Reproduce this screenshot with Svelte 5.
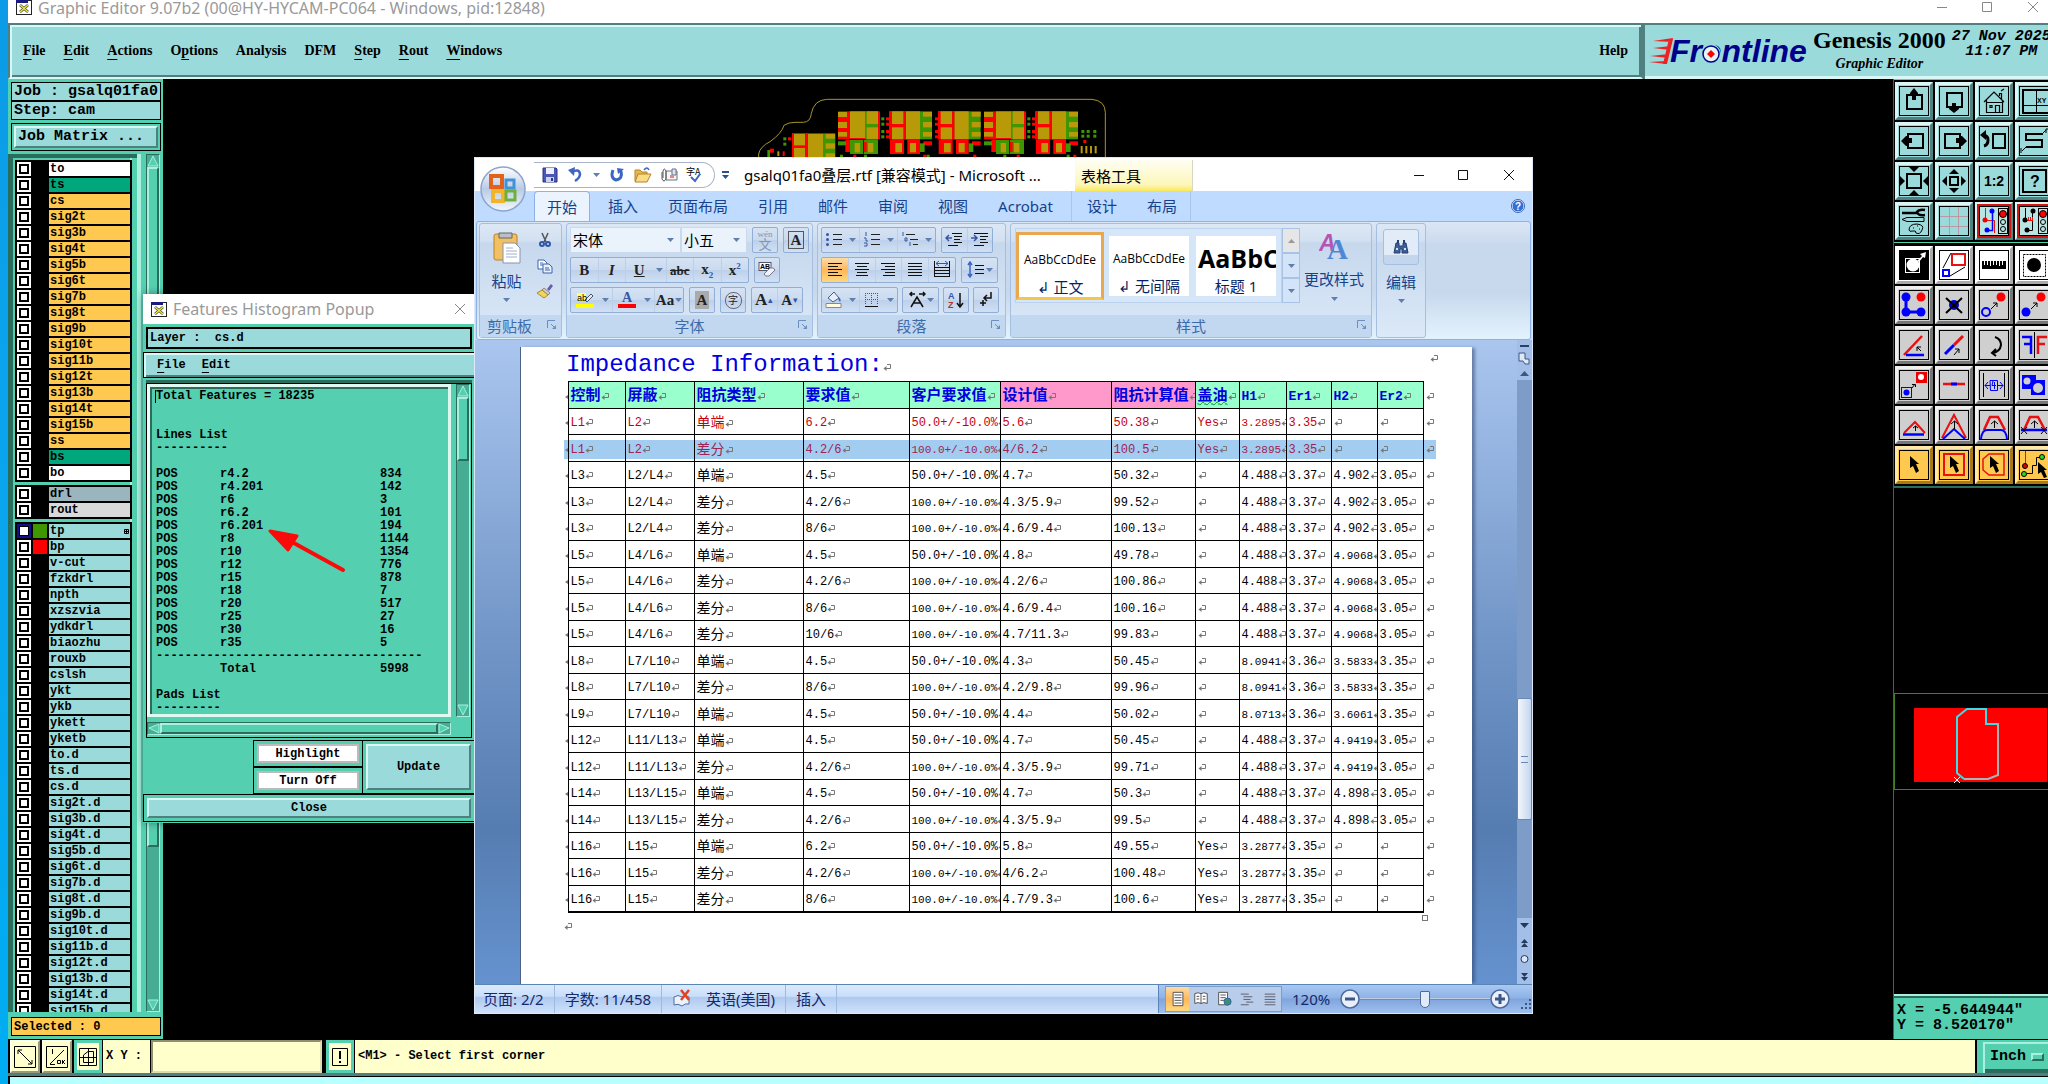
<script>
  const menus = [['F', 'ile'], ['E', 'dit'], ['A', 'ctions'], ['', 'O', 'p', 'tions'], ['', 'Analysis'], ['', 'DFM'], ['S', 'tep'], ['R', 'out'], ['W', 'indows']];

  const boardLayers = ['to', 'ts', 'cs', 'sig2t', 'sig3b', 'sig4t', 'sig5b', 'sig6t', 'sig7b', 'sig8t', 'sig9b', 'sig10t',
    'sig11b', 'sig12t', 'sig13b', 'sig14t', 'sig15b', 'ss', 'bs', 'bo'];
  const drillLayers = ['drl', 'rout'];
  const miscLayers = ['tp', 'bp', 'v-cut', 'fzkdrl', 'npth', 'xzszvia', 'ydkdrl', 'biaozhu', 'rouxb', 'cslsh', 'ykt', 'ykb',
    'ykett', 'yketb', 'to.d', 'ts.d', 'cs.d', 'sig2t.d', 'sig3b.d', 'sig4t.d', 'sig5b.d', 'sig6t.d', 'sig7b.d', 'sig8t.d',
    'sig9b.d', 'sig10t.d', 'sig11b.d', 'sig12t.d', 'sig13b.d', 'sig14t.d', 'sig15b.d'];
  const layerGroups = [boardLayers, drillLayers, miscLayers];

  function layerColor(name) {
    if (name === 'to' || name === 'bo') return 'white';
    if (name === 'ts' || name === 'bs') return 'mask';
    if (name === 'drl') return 'drill';
    if (name === 'rout') return 'route';
    if (boardLayers.includes(name)) return 'copper';
    return 'misc';
  }

  const lines = [['r4.2', 834], ['r4.201', 142], ['r6', 3], ['r6.2', 101], ['r6.201', 194], ['r8', 1144], ['r10', 1354],
    ['r12', 776], ['r15', 878], ['r18', 7], ['r20', 517], ['r25', 27], ['r30', 16], ['r35', 5]];

  const headers = ['控制', '屏蔽', '阻抗类型', '要求值', '客户要求值', '设计值', '阻抗计算值', '盖油', 'H1', 'Er1', 'H2', 'Er2'];
  const SE = '50.0+/-10.0%';
  const DF = '100.0+/-10.0%';
  const rows = [
    ['L1', 'L2', '单端', '6.2', SE, '5.6', '50.38', 'Yes', '3.2895', '3.35', '', ''],
    ['L1', 'L2', '差分', '4.2/6', DF, '4/6.2', '100.5', 'Yes', '3.2895', '3.35', '', ''],
    ['L3', 'L2/L4', '单端', '4.5', SE, '4.7', '50.32', '', '4.488', '3.37', '4.902', '3.05'],
    ['L3', 'L2/L4', '差分', '4.2/6', DF, '4.3/5.9', '99.52', '', '4.488', '3.37', '4.902', '3.05'],
    ['L3', 'L2/L4', '差分', '8/6', DF, '4.6/9.4', '100.13', '', '4.488', '3.37', '4.902', '3.05'],
    ['L5', 'L4/L6', '单端', '4.5', SE, '4.8', '49.78', '', '4.488', '3.37', '4.9068', '3.05'],
    ['L5', 'L4/L6', '差分', '4.2/6', DF, '4.2/6', '100.86', '', '4.488', '3.37', '4.9068', '3.05'],
    ['L5', 'L4/L6', '差分', '8/6', DF, '4.6/9.4', '100.16', '', '4.488', '3.37', '4.9068', '3.05'],
    ['L5', 'L4/L6', '差分', '10/6', DF, '4.7/11.3', '99.83', '', '4.488', '3.37', '4.9068', '3.05'],
    ['L8', 'L7/L10', '单端', '4.5', SE, '4.3', '50.45', '', '8.0941', '3.36', '3.5833', '3.35'],
    ['L8', 'L7/L10', '差分', '8/6', DF, '4.2/9.8', '99.96', '', '8.0941', '3.36', '3.5833', '3.35'],
    ['L9', 'L7/L10', '单端', '4.5', SE, '4.4', '50.02', '', '8.0713', '3.36', '3.6061', '3.35'],
    ['L12', 'L11/L13', '单端', '4.5', SE, '4.7', '50.45', '', '4.488', '3.37', '4.9419', '3.05'],
    ['L12', 'L11/L13', '差分', '4.2/6', DF, '4.3/5.9', '99.71', '', '4.488', '3.37', '4.9419', '3.05'],
    ['L14', 'L13/L15', '单端', '4.5', SE, '4.7', '50.3', '', '4.488', '3.37', '4.898', '3.05'],
    ['L14', 'L13/L15', '差分', '4.2/6', DF, '4.3/5.9', '99.5', '', '4.488', '3.37', '4.898', '3.05'],
    ['L16', 'L15', '单端', '6.2', SE, '5.8', '49.55', 'Yes', '3.2877', '3.35', '', ''],
    ['L16', 'L15', '差分', '4.2/6', DF, '4/6.2', '100.48', 'Yes', '3.2877', '3.35', '', ''],
    ['L16', 'L15', '差分', '8/6', DF, '4.7/9.3', '100.6', 'Yes', '3.2877', '3.35', '', '']
  ];

  const tabs = ['开始', '插入', '页面布局', '引用', '邮件', '审阅', '视图', 'Acrobat'];

  // tool buttons, four to a row, each icon drawn on a 30x30 grid
  const K = 'fill="none" stroke="#000"';
  const B = 'fill="none" stroke="#00f"';
  const R = 'fill="none" stroke="#e81010"';
  const light = '<rect x="19.500" y="2.500" width="9" height="25" fill="#b8e4e2" stroke="#000"/><circle cx="24" cy="8" r="3.500" fill="#f00" stroke="#000"/><circle cx="24" cy="16" r="2.500" fill="none" stroke="#000"/><circle cx="24" cy="23" r="2.500" fill="none" stroke="#000"/>';
  const cursor = '<path d="M11 6 L20 14 H17 L20 21 L17 23 L14 16 L11 18Z"/>';
  const viewTools = [
    ['up', `<rect x="8" y="9" width="15" height="14" ${K} stroke-width="2"/><path d="M15 2 L19 7 V9 H17 V14 H13 V9 H11 V7Z"/>`],
    ['down', `<rect x="8" y="7" width="15" height="14" ${K} stroke-width="2"/><path d="M15 27 L20 23 V21 H17 V17 H13 V21 H10 V23Z"/>`],
    ['home', `<path d="M5 16 L15 6 L25 16 M7.500 14 V26.500 H23.500 V14 M8 16.500 H23 M16.500 26 V19.500 H20.500 V26 M11 19.500 h2 v2 h-2z M20.500 10 V7.500 H22.500 V13 M22 5 l3 -2" ${K} stroke-width="1.200"/>`],
    ['pan xy', `<path d="M30 19.500 H4 M17.500 4 V27" ${K}/><path d="M30 4 H4 V27 H30" ${K} stroke-width="2"/><text x="18" y="17" font-size="7" font-weight="bold" font-family="Liberation Sans">XY</text>`],
    ['left', `<rect x="9" y="8" width="15" height="14" ${K} stroke-width="2"/><path d="M2 15 L7 10 H9 V12 H13 V17 H9 V20 H7Z"/>`],
    ['right', `<rect x="6" y="8" width="15" height="14" ${K} stroke-width="2"/><path d="M28 15 L23 10 H21 V12 H17 V17 H21 V20 H23Z"/>`],
    ['previous', `<rect x="14" y="8" width="12" height="14" ${K} stroke-width="2"/><path d="M5 9 Q9 10 9 14 Q9 19 5 20" ${K} stroke-width="3"/><path d="M1 9 L7 4 V14Z"/>`],
    ['snake', `<path d="M24 8 H7 V14 H23 V21 H7" ${K} stroke-width="2"/><path d="M23 8 L27 4 M27 7 V3 H30 M7 21 L3 25 M2 22 V27" ${K}/>`],
    ['zoom in', `<rect x="8" y="8" width="14" height="14" ${K} stroke-width="2"/><path d="M10 1 H20 L15 6Z M10 29 H20 L15 24Z M1 10 V20 L6 15Z M29 10 V20 L24 15Z"/>`],
    ['zoom out', `<rect x="11" y="11" width="8" height="8" ${K} stroke-width="2"/><path d="M10 8 H20 L15 3Z M10 22 H20 L15 27Z M8 10 V20 L3 15Z M22 10 V20 L27 15Z"/>`],
    ['scale', `<text x="15" y="20" font-size="14" font-weight="bold" text-anchor="middle" font-family="Liberation Sans">1:2</text>`],
    ['help', `<rect x="4" y="4" width="23" height="22" ${K} stroke-width="2"/><text x="16" y="21" font-size="16" font-weight="bold" text-anchor="middle" font-family="Liberation Sans">?</text>`],
    ['setup', `<path d="M3 7 H18 M26 4 q-6 -1 -8 2 q1 4 8 3" ${K} stroke-width="2.500"/><path d="M3 13.500 L8 11.500 H25 V15.500 H8Z M10 24 q0 -6 8 -6 q8 1 5 6 q-2 5 -6 3 q0 -3 -3 -2 q-4 1 -4 -1z M14 22h1 M18 20h1 M20 23h1" ${K}/>`],
    ['grid', `<path d="M10.500 1 V29 M19.500 1 V29 M1 10.500 H29 M1 20.500 H29" fill="none" stroke="#b99aa4"/>`],
    ['red nets', `<path d="M6.500 2 V14.500 H15.500 V27" ${R}/><path d="M13.500 5 V24.500 H8" ${B} stroke-width="1.500"/><circle cx="6" cy="14" r="2.500" fill="#e00"/><circle cx="13" cy="5" r="2.500" fill="#00f"/><circle cx="8" cy="24" r="2.500" fill="#00f"/>${light}`],
    ['black nets', `<path d="M6.500 2 V13 M13.500 6 V24.500 H8" ${K}/><path d="M8 14.500 H14 M9.500 11 V14 M11.500 11 V14 M13.500 11 V14" ${R}/><circle cx="6" cy="14" r="2.500"/><circle cx="14" cy="5" r="2.500"/><circle cx="8" cy="24" r="2.500"/>${light}`]
  ];
  const editTools = [
    ['symbol', `<rect width="30" height="30"/><rect x="6.500" y="8.500" width="14" height="14" fill="none" stroke="#fff"/><circle cx="14" cy="15" r="6.500" fill="#fff"/><path d="M18 11 L23 6 L21 4 L27 2 L26 8 L24 7 L20 12" fill="#fff"/>`],
    ['resize', `<rect x="13" y="4" width="13" height="11" ${R} stroke-width="2"/><rect x="4" y="20" width="6" height="6" ${B} stroke-width="2"/><path d="M4 18 L12 3 M11 26 L26 17" ${K}/>`],
    ['measure', `<path d="M3 11 H27 V19 H3Z"/><path d="M5.500 11v4 M8.500 11v4 M11.500 11v5 M14.500 11v4 M17.500 11v4 M20.500 11v5 M23.500 11v4" stroke="#fff"/>`],
    ['area', `<rect x="4.500" y="4.500" width="22" height="22" ${K} stroke-dasharray="2 1"/><circle cx="15" cy="15" r="7"/>`],
    ['net', `<path d="M7 7 V22 H22" ${B} stroke-width="3"/><circle cx="7" cy="7" r="4.500" fill="#00f"/><circle cx="7" cy="22" r="4.500" fill="#00f"/><circle cx="22" cy="22" r="4.500" fill="#00f"/><circle cx="22" cy="7" r="4.500" fill="#f00"/>`],
    ['delete', `<circle cx="15" cy="15" r="5" fill="#00c"/><path d="M7 8 L23 23 M23 8 L7 23" ${K} stroke-width="2"/>`],
    ['move', `<circle cx="7" cy="22" r="4" ${B} stroke-width="2"/><path d="M12 19 L18 13 M14 13 H18 V17" ${K}/><circle cx="22" cy="7" r="4.500" fill="#f00"/>`],
    ['copy', `<circle cx="7" cy="22" r="4.500" fill="#00f"/><path d="M12 19 L18 13 M14 13 H18 V17" ${K}/><circle cx="22" cy="7" r="4.500" fill="#f00"/>`],
    ['angle', `<path d="M5 25 L23 6" ${R} stroke-width="2.500"/><path d="M7 25 H25" ${B} stroke-width="2.500"/><path d="M22 21 L18 17 M18 21 V17 H22" ${K}/>`],
    ['extend', `<path d="M6 24 L15 15" ${B} stroke-width="3"/><path d="M15 15 L24 6" ${R} stroke-width="3"/><path d="M15 25 L20 19 M16 19 H20 V23" ${K}/>`],
    ['rotate', `<path d="M16 7 Q22 9 22 15 Q21 22 13 23 M17 19 L13 23 L17 26" ${K} stroke-width="2"/>`],
    ['mirror', `<path d="M3 7 H12 V24 M5 14 H12" ${B} stroke-width="2.500"/><path d="M15.500 2 V28" ${K}/><path d="M28 7 H19 V24 M19 14 H26" ${R} stroke-width="2.500"/>`],
    ['change', `<rect x="17" y="2" width="11" height="11" fill="#e00"/><circle cx="22" cy="7" r="3" fill="#fff"/><rect x="2.500" y="17.500" width="10" height="10" ${B}/><circle cx="7.500" cy="22.500" r="3" fill="#00f"/><path d="M13 18 L16 14 M13 14.500 H16.500 V17" ${K}/>`],
    ['break', `<path d="M4 14 H26" ${R} stroke-width="2.500"/><path d="M12 14 H18" ${B} stroke-width="3"/>`],
    ['spacing', `<path d="M4.500 3 V27 M25.500 3 V27" ${K}/><path d="M6 15.500 H11 M18 15.500 H24 M9 12 L6 15.500 L9 19 M21 12 L24 15.500 L21 19 M11 10.500 H18.500 V20.500 H11.500Z M14 11 L13 15.500 H17 M15.500 12 V19" ${B}/>`],
    ['surface', `<path d="M3 5 H17 V10 H26 V25 H12 V19 H3Z" fill="#00f"/><circle cx="8" cy="11" r="3.500" fill="#cfcfcf"/><circle cx="19" cy="18" r="5" fill="#cfcfcf"/>`],
    ['slope', `<path d="M5 23 L16 12 L26 23" ${R} stroke-width="2"/><path d="M4 24.500 H25" ${B} stroke-width="2.500"/><path d="M16.500 21 V16 M14 18 L16.500 16 L19 18" ${K}/>`],
    ['peak', `<path d="M3 28 L15 5 L27 28" ${R} stroke-width="2"/><path d="M4 29 L15 19 L26 29" ${B} stroke-width="2"/><path d="M15.500 19 V11 M12 14 L15.500 11 L19 14" ${K}/>`],
    ['plateau', `<path d="M5 20 L11 7 H19 L26 20" ${R} stroke-width="2.500"/><path d="M2 29 Q3 20 8 20 H22 Q27 20 28 29" ${B} stroke-width="2"/><path d="M15.500 18 V11 M12 14 L15.500 11 L19 14" ${K}/>`],
    ['trapezoid', `<path d="M5 20 L11 7 H19 L26 20" ${R} stroke-width="2.500"/><path d="M2 20 H28" ${B} stroke-width="2.500"/><path d="M2 17 L8 24 M8 17 L2 24 M22 17 L28 24 M28 17 L22 24 M15.500 18 V11 M12 14 L15.500 11 L19 14" ${K}/>`]
  ];
  const selectTools = [
    ['select', cursor],
    ['select box', `<rect x="5" y="4" width="20" height="21" ${R} stroke-width="2"/>${cursor}`],
    ['select polygon', `<path d="M10 4 H25 V25 H10 L4 20 V9Z" ${R} stroke-width="1.500"/>${cursor}`],
    ['select net', `<path d="M6.500 0 V16" ${R}/><path d="M8 23.500 H13.500 V15.500 H17.500 V7.500 H22" ${K}/><circle cx="6" cy="16" r="2.500" fill="#d00" stroke="#000"/><circle cx="5" cy="24" r="2.500" fill="#2d2" stroke="#000"/><circle cx="23" cy="7" r="2.500" fill="#2d2" stroke="#000"/><path d="M19 12 L28 20 H25 L28 27 L25 28 L22 22 L19 24Z"/>`]
  ];

  // component footprints of the board, in thirds of a pixel
  const G = '#b89a08';
  const rect = (x, y, w, h, c) => `<rect x="${x}" y="${y}" width="${w}" height="${h}" fill="${c}"/>`;
  const chipA = (x) => rect(x, 94, 126, 84, '#f00') + rect(x + 81, 94, 39, 84, '#3f9600') + rect(x, 96, 27, 15, G) + rect(x, 126, 27, 18, G) + rect(x, 156, 27, 14, G)
    + rect(x + 36, 94, 45, 80, G) + rect(x + 86, 94, 34, 38, G) + rect(x + 86, 142, 34, 36, G)
    + rect(x + 22, 180, 14, 36, '#f00') + rect(x, 184, 24, 12, '#3f9600') + rect(x + 36, 180, 40, 42, '#3f9600') + rect(x + 78, 180, 42, 42, '#3f9600')
    + rect(x + 50, 189, 16, 28, G) + rect(x + 90, 189, 16, 28, G) + rect(x + 78, 186, 8, 30, '#f00');
  const chipB = (x) => rect(x, 94, 128, 84, '#3f9600') + rect(x, 94, 50, 84, '#f00') + rect(x + 8, 94, 34, 38, G) + rect(x + 8, 142, 34, 36, G) + rect(x + 50, 94, 42, 84, G)
    + rect(x + 101, 96, 27, 14, G) + rect(x + 101, 126, 27, 16, G) + rect(x + 101, 156, 27, 14, G)
    + rect(x + 2, 180, 42, 42, '#f00') + rect(x + 54, 180, 38, 42, '#f00') + rect(x + 18, 189, 20, 28, G) + rect(x + 62, 189, 18, 28, G)
    + rect(x + 102, 184, 26, 12, '#f00') + rect(x + 92, 190, 14, 26, '#3f9600');
  const dots = (x, y) => rect(x, y, 9, 9, '#3f9600') + rect(x + 14, y, 9, 9, '#f00');
  const dots2 = (x, y) => rect(x, y, 9, 9, '#3f9600') + rect(x, y + 14, 9, 9, '#3f9600');
  const board = chipA(294) + chipA(732) + chipB(448) + chipB(594) + chipB(886)
    + [424, 862].map((x) => [112, 128, 150, 166].map((y) => dots(x, y)).join('')).join('')
    + [112, 128, 150, 166].map((y) => rect(585, y, 9, 9, '#f00')).join('')
    + rect(156, 160, 130, 80, '#3f9600') + rect(156, 160, 48, 80, '#f00') + rect(162, 162, 33, 34, G) + rect(162, 204, 33, 36, G) + rect(204, 162, 45, 78, G)
    + rect(257, 162, 28, 14, G) + rect(257, 190, 28, 16, G) + rect(257, 220, 28, 16, G) + dots(130, 172) + rect(130, 188, 9, 9, '#3f9600')
    + rect(82, 210, 8, 30, '#3f9600') + rect(90, 206, 12, 12, '#f00') + rect(112, 214, 6, 14, G) + rect(128, 214, 6, 14, '#f00')
    + dots2(1024, 150) + dots2(1040, 150) + dots2(1060, 150) + rect(1030, 180, 9, 9, '#f00')
    + [1022, 1036, 1050, 1064].map((x) => rect(x, 198, 6, 22, G)).join('')
    + [300, 340, 372, 550, 560, 700, 790, 830, 980, 1000].map((x, i) => rect(x, 224, 9, 9, i % 2 ? '#f00' : '#3f9600')).join('');

  const icons = {
    save: '<path d="M2 2 H15 L16 3 V16 H2Z" fill="#4a57b5" stroke="#2b3580"/><path d="M5 2 H13 V8 H5Z" fill="#eef"/><path d="M5 11 H13 V16 H5Z" fill="#cdd3ef"/><path d="M10 12h2v3h-2z" fill="#2b3580"/>',
    undo: '<path d="M5 6 Q12 2 13 8 Q13 12 8 15" fill="none" stroke="#3c66c4" stroke-width="2.500"/><path d="M1 4 L8 1 L7 10Z" fill="#3c66c4"/>',
    redo: '<path d="M5 4 Q2 12 8 14 Q15 13 13 5" fill="none" stroke="#3c66c4" stroke-width="3"/><path d="M9 2 L16 3 L10 8Z" fill="#3c66c4"/>',
    open: '<path d="M1 4 H6 L8 6 H13 V15 H1Z" fill="#e8b84a" stroke="#b3832a"/><path d="M4 8 H17 L13 16 H1Z" fill="#fbdc86" stroke="#b3832a"/><path d="M10 4 Q13 0 15 4" fill="none" stroke="#3c66c4" stroke-width="1.500"/>',
    mail: '<path d="M6 5 H17 V14 H6Z" fill="#f4f6fa" stroke="#6a7385"/><path d="M12 3 h4v6h-4z" fill="#dfe6f2" stroke="#6a7385"/><path d="M10 9 h4v3h-4z" fill="#e58b74"/><path d="M2 6 V13 Q4 17 6 13 V5 Q4 1 3 5 V12" fill="none" stroke="#555"/>',
    paste: '<rect x="1" y="3" width="23" height="26" rx="2" fill="#f2c063" stroke="#b98228"/><path d="M6 2 H19 V7 H6Z" fill="#b9bec8" stroke="#666"/><path d="M10 12 H22 L27 17 V32 H10Z" fill="#fff" stroke="#8494b0"/><path d="M13 17 h7 M13 20 h11 M13 23 h11 M13 26 h11" stroke="#9fb0cc"/>',
    cut: '<path d="M6 2 L10 11 M12 2 L8 11" stroke="#555" stroke-width="1.500" fill="none"/><circle cx="6" cy="13" r="2" fill="none" stroke="#2f57a8" stroke-width="2"/><circle cx="12" cy="13" r="2" fill="none" stroke="#2f57a8" stroke-width="2"/>',
    copy: '<path d="M2 3 H8 L11 6 V12 H2Z" fill="#fff" stroke="#3c62ad"/><path d="M7 7 H13 L16 10 V16 H7Z" fill="#e7effc" stroke="#3c62ad"/><path d="M4 6h3M4 8h3M9 11h4M9 13h5" stroke="#3c62ad"/>',
    brush: '<path d="M11 6 L15 1 L17 3 L13 8Z" fill="#6c5aa8"/><path d="M8 5 L14 10 L12 12 L6 7Z" fill="#ccc" stroke="#888"/><path d="M6 7 L12 12 L8 15 L1 10Z" fill="#f3d45f" stroke="#a98d24"/>',
    bullets: '<path d="M8 3.500h9M8 8.500h9M8 13.500h9" stroke="#222"/><circle cx="2.500" cy="3.500" r="1.500" fill="#3457a6"/><circle cx="2.500" cy="8.500" r="1.500" fill="#3457a6"/><circle cx="2.500" cy="13.500" r="1.500" fill="#3457a6"/>',
    numbers: '<path d="M8 3.500h9M8 8.500h9M8 13.500h9" stroke="#222"/><path d="M3 1v4M1 7h2v3h2M1 12h3v3H1" fill="none" stroke="#3457a6"/>',
    multi: '<path d="M5 3.500h9M9 8.500h8M12 13.500h5" stroke="#222"/><path d="M2 1v4M4 7h2v3H4zM9 11v4" fill="none" stroke="#3457a6"/>',
    outdent: '<path d="M7 2.500h10M9 5.500h8M9 8.500h6M9 11.500h8M3 14.500h10" stroke="#111"/><path d="M7 7H1M4 4L1 7L4 10" fill="none" stroke="#3457a6" stroke-width="1.500"/>',
    indent: '<path d="M3 2.500h14M9 5.500h8M9 8.500h6M9 11.500h8M3 14.500h10" stroke="#111"/><path d="M0 7H6M3 4L6 7L3 10" fill="none" stroke="#3457a6" stroke-width="1.500"/>',
    left: '<path d="M2 2.500h14M2 5.500h10M2 8.500h14M2 11.500h10M2 14.500h14" stroke="#111"/>',
    center: '<path d="M2 2.500h14M4 5.500h10M2 8.500h14M4 11.500h10M3 14.500h12" stroke="#111"/>',
    right: '<path d="M2 2.500h14M6 5.500h10M2 8.500h14M6 11.500h10M4 14.500h12" stroke="#111"/>',
    justify: '<path d="M2 2.500h14M2 5.500h14M2 8.500h14M2 11.500h14M2 14.500h14" stroke="#111"/>',
    spread: '<path d="M2 6.500h14M2 9.500h14M2 12.500h14M2 15.500h14M1.500 0v16M16.500 0v16" stroke="#111"/><path d="M3 2.500h12M6 0L3 2.500L6 5M12 0l3 2.500l-3 2.500" fill="none" stroke="#3457a6"/>',
    spacing: '<path d="M8 4.500h9M8 8.500h9M8 12.500h9" stroke="#111"/><path d="M3 1v15M1 4l2-3l2 3M1 13l2 3l2-3" fill="none" stroke="#3c66c4" stroke-width="1.500"/>',
    fill: '<path d="M3 7 L9 1 L14 7 L8 11Z" fill="#e8eef9" stroke="#4a5d85"/><path d="M13 6q4 2 2 5q-2-2-2-5" fill="#3c66c4"/><path d="M1 12.500h15v4H1z" fill="#fffbe0" stroke="#888"/>',
    borders: '<path d="M2.500 2v12M8.500 2v12M14.500 2v12M2 2.500h12M2 8.500h12" stroke="#555" stroke-dasharray="1 1"/><path d="M2 15.500h13" stroke="#111"/>',
    sort: '<text x="1" y="8" font-size="9" font-weight="bold" fill="#3457a6" font-family="Liberation Sans">A</text><text x="1" y="17" font-size="9" font-weight="bold" fill="#a33" font-family="Liberation Sans">Z</text><path d="M13 2v13M10 12l3 4l3-4" fill="none" stroke="#111" stroke-width="1.500"/>',
    marks: '<path d="M14 1v6H7M10 4L7 7l3 3M3 12h6M6 9v6" fill="none" stroke="#111" stroke-width="1.500"/>',
    asian: '<path d="M3 16L9 6L15 16M6 12h6M2 3h5M11 3h6M4 1L2 3l2 2M15 1l2 2l-2 2" fill="none" stroke="#111" stroke-width="1.500"/>',
    highlight: '<rect y="13" width="18" height="4" fill="#ff0"/><rect x="1" y="2" width="9" height="8" fill="#ff6"/><path d="M9 9L15 3l2 2l-6 6z" fill="#eee" stroke="#456"/><text x="1" y="10" font-size="9" font-family="Liberation Sans">ab</text>',
    color: '<text x="4" y="11" font-size="14" font-weight="bold" fill="#3457a6" font-family="Liberation Serif">A</text><rect y="13" width="18" height="4" fill="#f00"/>',
    clear: '<rect x="1" y="1.500" width="12" height="8" fill="#fff" stroke="#556"/><text x="2" y="8" font-size="7" font-weight="bold" font-family="Liberation Sans">AB</text><path d="M6 13L12 7q4-1 5 2L11 15q-4 1-5-2z" fill="#eef3fb" stroke="#778"/>',
    find: '<path d="M4 5h3v3h4V5h3l2 10h-6v-4H8v4H2z" fill="#3f5f98" stroke="#23406f"/><path d="M5 2h2v3H5zM11 2h2v3h-2z" fill="#23406f"/><path d="M4 11h2M12 11h2" stroke="#cfe0ff" stroke-width="2"/>',
    print: '<path d="M3.500 1.500h11v15h-11z" fill="#fff" stroke="#444"/><path d="M5 4.500h8M5 7.500h8M5 10.500h8M5 13.500h8" stroke="#444"/>',
    read: '<path d="M9 3Q6 1 2 3v11q4-2 7 0q3-2 7 0V3q-4-2-7 0v11" fill="#fff" stroke="#444"/><path d="M4 6h3M4 9h3M11 6h3M11 9h3" stroke="#444"/>',
    web: '<path d="M3 1.500h10v14H3z" fill="#fff" stroke="#444"/><path d="M5 4.500h6M5 7.500h6M5 10.500h4" stroke="#444"/><circle cx="13" cy="12" r="4" fill="#3b8f6f" stroke="#2e5fa8"/>',
    outline: '<path d="M2 3.500h9M5 6.500h10M5 9.500h8M8 12.500h8M2 15.500h9" stroke="#556"/>',
    draft: '<path d="M3 3.500h12M3 6.500h12M3 9.500h12M3 12.500h12M3 15.500h12" stroke="#556"/>'
  };
  const views = ['print', 'read', 'web', 'outline', 'draft'];

  let xy = $state('');
  let zoom = $state(50);
</script>

{#snippet icon(name, size = 18)}
  <svg width={size} height={size} viewBox="0 0 18 18" aria-hidden="true">{@html icons[name]}</svg>
{/snippet}

{#snippet drop()}
  <svg class="drop" width="7" height="4" viewBox="0 0 7 4" aria-hidden="true"><path d="M0 0 H7 L3.500 4Z" fill="#5f7fae" /></svg>
{/snippet}

{#snippet mark()}
  <svg class="mark" width="8" height="8" viewBox="0 0 8 8" aria-hidden="true"><path d="M4 0.500 H7.500 V4.500 H2" fill="none" stroke="#777" /><path d="M0.500 4.500 L3.500 2 V7Z" fill="#777" /></svg>
{/snippet}

{#snippet launcher()}
  <svg class="launcher" width="10" height="10" viewBox="0 0 10 10" aria-hidden="true"><path d="M0.500 8 V0.500 H8 M4 4 L8 8" fill="none" stroke="#6d8ebd" /><path d="M9 5 V9 H5Z" fill="#6d8ebd" /></svg>
{/snippet}

{#snippet xicon()}
  <svg width="16" height="15" viewBox="0 0 16 15" aria-hidden="true"><rect x="0.500" y="0.500" width="15" height="14" fill="#fff" stroke="#222" /><rect width="12" height="3" fill="#1a1a80" /><path d="M4 5 L12 12 M12 5 L4 12" stroke="#333" stroke-width="2.500" /><path d="M4 5 L12 12 M12 5 L4 12" stroke="#ee3" stroke-width="1.500" /></svg>
{/snippet}

{#snippet tools(list, kind)}
  <div class="tools {kind}">
    {#each list as [name, shape]}
      <button class="tool" class:nets={name.endsWith('nets')} aria-label={name}>
        <svg width="30" height="30" viewBox="0 0 30 30">{@html shape}<rect x="0.500" y="0.500" width="29" height="29" fill="none" stroke="#000" /></svg>
      </button>
    {/each}
  </div>
{/snippet}

<div class="desktop">
  <div class="app">
    <header class="titlebar">
      {@render xicon()}
      <span>Graphic Editor 9.07b2 (00@HY-HYCAM-PC064 - Windows, pid:12848)</span>
      <svg class="winctl" width="104" height="14" viewBox="0 0 104 14"><path d="M0 7.500 H10 M45.500 2.500 h9 v9 h-9z M91 2 l10 10 M101 2 l-10 10" fill="none" stroke="#888" /></svg>
    </header>

    <div class="top">
      <nav class="menubar">
        {#each menus as m}
          <a href="#menu">{#if m[0]}<u>{m[0]}</u>{/if}{m[1]}{#if m[2]}<u>{m[2]}</u>{m[3]}{/if}</a>
        {/each}
        <a class="help" href="#help">Help</a>
      </nav>
      <div class="brand">
        <svg class="logo" width="162" height="32" viewBox="0 0 162 32">
          <path d="M4 5 L24 2 L23 6Z M4 12 L22 10 L21 14Z M1 20 L20 18 L19 22Z M0 26 L18 25 L17 28Z M20 3 H24 L18 28 H14Z" fill="#e22" />
          <text x="21" y="26" font-size="32" font-weight="bold" font-style="italic" font-family="Liberation Sans" fill="#00008b">Frontline</text>
          <circle cx="62" cy="18" r="10" fill="#9bdadb" />
          <circle cx="62" cy="18" r="8" fill="#e4f4f4" stroke="#00008b" stroke-width="1.500" />
          <path d="M62 14 L66 18 L62 22 L58 18Z" fill="#f00" />
        </svg>
        <div class="product">
          <strong>Genesis 2000</strong>
          <em>Graphic Editor</em>
        </div>
        <div class="clock">
          <span>27 Nov 2025</span>
          <span>11:07 PM</span>
        </div>
      </div>
    </div>

    <main>
      <aside class="side">
        <div class="field">Job : gsalq01fa0</div>
        <div class="field">Step: cam</div>
        <div class="matrix"><button>Job Matrix ...</button></div>
        <div class="lists">
          <div class="frame">
            {#each layerGroups as group}
              <ul>
                {#each group as name}
                  <li>
                    <label>
                      <input type="checkbox" class:current={name === 'tp'} />
                      <i class:green={name === 'tp'} class:red={name === 'bp'}></i>
                      <span class={layerColor(name)}>{name}{#if name === 'tp'}<svg width="5" height="5" viewBox="0 0 5 5"><path d="M0.500 0.500h4v4h-4z M2.500 0v5 M0 2.500h5" fill="none" stroke="#000" stroke-width="1" /></svg>{/if}</span>
                    </label>
                  </li>
                {/each}
              </ul>
            {/each}
          </div>
          <div class="vbar">
            <svg width="12" height="12" viewBox="0 0 12 12"><path d="M6 1 L11 11 H1Z" fill="#54cfb0" stroke="#a9f0df" /></svg>
            <div class="thumb"></div>
            <svg width="12" height="12" viewBox="0 0 12 12"><path d="M1 1 H11 L6 11Z" fill="#54cfb0" stroke="#a9f0df" /></svg>
          </div>
        </div>
        <div class="field selected">Selected : 0</div>
      </aside>

      <div class="canvas">
        <svg class="board" width="400" height="80" viewBox="0 0 1200 240">
          <path d="M56 240 V222 Q60 200 90 185 Q125 160 132 136 Q145 127 165 127 H190 Q212 126 214 100 Q222 60 260 58 H1056 Q1096 62 1096 98 V240" fill="none" stroke="#a8962a" stroke-width="3" />
          {@html board}
        </svg>
      </div>

      <aside class="right">
        {@render tools(viewTools, 'view')}
        {@render tools(editTools, 'edit')}
        {@render tools(selectTools, 'pick')}
        <div class="overview">
          <svg width="160" height="97" viewBox="0 0 160 97">
            <rect x="0.500" y="0.500" width="170" height="96" fill="#000" stroke="#3f7f25" />
            <rect x="20" y="15" width="133" height="74" fill="#f00" />
            <path d="M92 31 H104 V82 L94 86 H70" fill="none" stroke="#a9b4b4" stroke-width="2" />
            <path d="M70 86 L63 80 V24 L73 16 H92 V31 H104" fill="none" stroke="#36e0e6" stroke-width="2" />
            <path d="M60 84 l6 6 M66 84 l-6 6" stroke="#fff" />
          </svg>
        </div>
        <div class="coords">
          <span>X = -5.644944"</span>
          <span>Y = 8.520170"</span>
        </div>
      </aside>
    </main>

    <footer>
      <button class="fbtn" aria-label="diagonal"><svg width="22" height="22" viewBox="0 0 22 22"><path d="M0.500 0.500h21v21h-21z M4 4 L18 18 M4 8 V4 H8 M14 18 H18 V14" fill="none" stroke="#000" /></svg></button>
      <button class="fbtn" aria-label="snap angle"><svg width="22" height="22" viewBox="0 0 22 22"><path d="M0.500 0.500h21v21h-21z M4 18 L18 4 M6.500 3 V8 M4 18.500 H9 M11.500 14.500 h3v3h-3z M16.500 14v4 M19 14l-2 2l2 2" fill="none" stroke="#000" /></svg></button>
      <button class="fbtn on" aria-label="grid"><svg width="18" height="18" viewBox="0 0 18 18"><path d="M0.500 0.500h17v17h-17z M4.500 7 L9 3.500 H14.500 V14.500 H4.500Z M9.500 1 V17 M1 9.500 H17" fill="none" stroke="#000" /></svg></button>
      <label for="xy">X Y :</label>
      <input id="xy" type="text" bind:value={xy} />
      <button class="fbtn on" aria-label="message"><svg width="16" height="18" viewBox="0 0 16 18"><path d="M0.500 0.500h15v17h-15z" fill="none" stroke="#000" /><path d="M7 3h2v8H7z M7 13h2v2H7z" /></svg></button>
      <p>&lt;M1&gt; - Select first corner</p>
      <div class="unit">
        <select aria-label="Unit"><option>Inch</option></select>
        <i></i>
      </div>
    </footer>
    <div class="strip"></div>
  </div>

  <section class="popup">
    <header>
      {@render xicon()}
      <span>Features Histogram Popup</span>
      <svg width="12" height="12" viewBox="0 0 12 12"><path d="M1 1 L11 11 M11 1 L1 11" stroke="#888" /></svg>
    </header>
    <div class="layer">Layer :&nbsp; cs.d</div>
    <nav><a href="#file"><u>F</u>ile</a><a href="#edit"><u>E</u>dit</a></nav>
    <div class="report">
      <div class="text">
        <p class="caret">Total Features = 18235</p>
        <p></p>
        <p></p>
        <p>Lines List</p>
        <p>----------</p>
        <p></p>
        {#each lines as [symbol, count]}
          <p class="cols"><span>POS</span><span>{symbol}</span><span>{count}</span></p>
        {/each}
        <p>-------------------------------------</p>
        <p class="cols"><span></span><span>Total</span><span>5998</span></p>
        <p></p>
        <p>Pads List</p>
        <p>---------</p>
      </div>
      <div class="vbar">
        <svg width="12" height="12" viewBox="0 0 12 12"><path d="M6 1 L11 11 H1Z" fill="#54cfb0" stroke="#a9f0df" /></svg>
        <div class="thumb"></div>
        <svg width="12" height="12" viewBox="0 0 12 12"><path d="M1 1 H11 L6 11Z" fill="#54cfb0" stroke="#a9f0df" /></svg>
      </div>
      <div class="hbar">
        <svg width="12" height="11" viewBox="0 0 12 11"><path d="M11 1 V10 L1 5Z" fill="#54cfb0" stroke="#a9f0df" /></svg>
        <div class="thumb"></div>
        <svg width="12" height="11" viewBox="0 0 12 11"><path d="M1 1 V10 L11 5Z" fill="#54cfb0" stroke="#a9f0df" /></svg>
      </div>
    </div>
    <div class="actions">
      <div class="cell hl"><button class="plain">Highlight</button></div>
      <div class="cell off"><button class="plain">Turn Off</button></div>
      <div class="cell update"><button>Update</button></div>
      <div class="cell close"><button>Close</button></div>
    </div>
    <svg class="arrow" width="80" height="46" viewBox="0 0 80 46"><path d="M24 14 L75 42" stroke="#fb0a0a" stroke-width="4" stroke-linecap="round" /><path d="M2 3 L29 8 L20 22Z" fill="#fb0a0a" stroke="#fb0a0a" stroke-width="3" stroke-linejoin="round" /></svg>
  </section>

  <section class="word">
    <header>
      <svg class="office" width="46" height="46" viewBox="0 0 46 46">
        <defs><linearGradient id="orb" x2="0" y2="1"><stop offset="0" stop-color="#fff" /><stop offset="0.500" stop-color="#b9cbe6" /><stop offset="1" stop-color="#f3f7fd" /></linearGradient></defs>
        <circle cx="23" cy="23" r="22" fill="url(#orb)" stroke="#8ba5cc" stroke-width="1.500" />
        <g fill="none" stroke-width="4"><rect x="11" y="10" width="11" height="11" stroke="#e2611c" /><rect x="26" y="14" width="8" height="8" stroke="#3f93d6" stroke-width="3" /><rect x="13" y="25" width="10" height="10" stroke="#f0b52a" /><rect x="26" y="25" width="9" height="9" stroke="#6fb03a" stroke-width="3" /></g>
      </svg>
      <div class="qat">
        {@render icon('save')}{@render icon('undo')}{@render drop()}{@render icon('redo')}{@render icon('open')}{@render icon('mail')}
        <svg width="18" height="18" viewBox="0 0 18 18"><text x="0" y="9" font-size="9" font-family="Noto Sans CJK SC">字A</text><path d="M5 11 L9 15 L14 8" fill="none" stroke="#3c66c4" stroke-width="2" /></svg>
      </div>
      <svg class="more" width="8" height="8" viewBox="0 0 8 8"><path d="M0 0h7v2H0z M0 4h7L3.500 8z" fill="#27508f" /></svg>
      <h1>gsalq01fa0叠层.rtf [兼容模式] - Microsoft ...</h1>
      <div class="context">表格工具</div>
      <svg class="wctl" width="101" height="12" viewBox="0 0 101 12"><path d="M0 6.500 H10 M44.500 1.500 h9 v9 h-9z M90 1 l10 10 M100 1 l-10 10" fill="none" stroke="#111" /></svg>
    </header>

    <nav class="tabs">
      {#each tabs as tab, i}
        <button class:active={i === 0}>{tab}</button>
      {/each}
      <div class="ctabs"><button>设计</button><button>布局</button></div>
      <svg class="qmark" width="14" height="14" viewBox="0 0 14 14"><circle cx="7" cy="7" r="6" fill="#2f6fdc" stroke="#fff" /><circle cx="7" cy="7" r="6.500" fill="none" stroke="#3b66a8" /><text x="7" y="11" font-size="10" font-weight="bold" text-anchor="middle" fill="#fff" font-family="Liberation Sans">?</text></svg>
    </nav>

    <div class="ribbon">
      <div class="group clip">
        <div class="body">
          <button class="big"><svg width="28" height="33" viewBox="0 0 28 33">{@html icons.paste}</svg>粘贴{@render drop()}</button>
          <div class="mini">{@render icon('cut')}{@render icon('copy')}{@render icon('brush')}</div>
        </div>
        <h2>剪贴板{@render launcher()}</h2>
      </div>

      <div class="group font">
        <div class="rows">
          <div class="line">
            <div class="combo face"><select aria-label="字体"><option>宋体</option></select>{@render drop()}</div>
            <div class="combo size"><select aria-label="字号"><option>小五</option></select>{@render drop()}</div>
            <div class="set one after"><button class="wen"><small>wén</small>文</button></div>
            <div class="set one"><button><b class="boxed">A</b></button></div>
          </div>
          <div class="line">
            <div class="set s179">
              <button><b>B</b></button><button><i><b>I</b></i></button><button><b class="under">U</b></button><button class="dd">{@render drop()}</button>
              <button><b><s>abc</s></b></button><button><b>x<sub>2</sub></b></button><button><b>x<sup>2</sup></b></button>
            </div>
            <div class="set one"><button aria-label="clear">{@render icon('clear')}</button></div>
          </div>
          <div class="line">
            <div class="set s114">
              <button aria-label="highlight">{@render icon('highlight')}</button><button class="dd">{@render drop()}</button>
              <button aria-label="color">{@render icon('color')}</button><button class="dd">{@render drop()}</button>
              <button><b>Aa</b>{@render drop()}</button>
            </div>
            <div class="set one"><button><b class="shade">A</b></button></div>
            <div class="set one"><button><span class="ring">字</span></button></div>
            <div class="set s51"><button><b class="grow">A</b><sup>▴</sup></button><button><b>A</b><sup>▾</sup></button></div>
          </div>
        </div>
        <h2>字体{@render launcher()}</h2>
      </div>

      <div class="group para">
        <div class="rows">
          <div class="line">
            <div class="set s115">
              {#each ['bullets', 'numbers', 'multi'] as n}<button aria-label={n}>{@render icon(n)}</button><button class="dd">{@render drop()}</button>{/each}
            </div>
            <div class="set s52"><button aria-label="outdent">{@render icon('outdent')}</button><button aria-label="indent">{@render icon('indent')}</button></div>
          </div>
          <div class="line">
            <div class="set s135">
              {#each ['left', 'center', 'right', 'justify', 'spread'] as n}<button class:hot={n === 'left'} aria-label={n}>{@render icon(n)}</button>{/each}
            </div>
            <div class="set s36"><button aria-label="line spacing">{@render icon('spacing')}{@render drop()}</button></div>
          </div>
          <div class="line tight">
            <div class="set s77"><button aria-label="fill">{@render icon('fill')}</button><button class="dd">{@render drop()}</button><button aria-label="borders">{@render icon('borders')}</button><button class="dd">{@render drop()}</button></div>
            <div class="set s36"><button aria-label="asian layout">{@render icon('asian')}{@render drop()}</button></div>
            <div class="set one"><button aria-label="sort">{@render icon('sort')}</button></div>
            <div class="set one"><button aria-label="marks">{@render icon('marks')}</button></div>
          </div>
        </div>
        <h2>段落{@render launcher()}</h2>
      </div>

      <div class="group styles">
        <div class="body">
          <div class="gallery">
            <button class="style picked"><span>AaBbCcDdEe</span>↲ 正文</button>
            <button class="style"><span>AaBbCcDdEe</span>↲ 无间隔</button>
            <button class="style heading"><span>AaBbC</span>标题 1</button>
          </div>
          <div class="spin"><button aria-label="up"><svg width="7" height="4" viewBox="0 0 7 4"><path d="M0 4H7L3.500 0Z" fill="#999" /></svg></button><button aria-label="down">{@render drop()}</button><button aria-label="all">{@render drop()}</button></div>
          <button class="big change">
            <svg width="30" height="30" viewBox="0 0 30 30"><text x="0" y="20" font-size="23" font-weight="bold" font-style="italic" fill="#b455b4" font-family="Liberation Sans">A</text><text x="8" y="28" font-size="29" font-weight="bold" fill="#4f86d6" font-family="Liberation Serif">A</text></svg>
            更改样式{@render drop()}
          </button>
        </div>
        <h2>样式{@render launcher()}</h2>
      </div>

      <div class="group find">
        <button class="big"><span class="tile">{@render icon('find')}</span>编辑{@render drop()}</button>
      </div>
    </div>

    <div class="doc">
      <article>
        <div class="heading-line"><h3>Impedance Information:{@render mark()}</h3>{@render mark()}</div>
        <table>
          <colgroup>
            <col class="edge" /><col class="c57" /><col class="c69" /><col class="c109" /><col class="c106" /><col class="c91" /><col class="c111" />
            <col class="c84" /><col class="c44" /><col class="c47" /><col class="c45" /><col class="c46" /><col class="c46" /><col class="tail" />
          </colgroup>
          <thead>
            <tr>
              <td class="out"><i></i></td>
              {#each headers as h, i}
                <th class:pink={i === 5 || i === 6}><span class:latin={i > 7} class:wavy={i === 7}>{h}</span>{@render mark()}</th>
              {/each}
              <td class="out end">{@render mark()}</td>
            </tr>
          </thead>
          <tbody>
            {#each rows as row, r}
              <tr class:warn={r < 2} class:sel={r === 1}>
                <td class="out"><i></i></td>
                {#each row as cell, c}
                  <td class:cjk={c === 2} class:small={cell === DF || (c > 7 && cell.length > 5)}>{cell}{@render mark()}</td>
                {/each}
                <td class="out end">{@render mark()}</td>
              </tr>
            {/each}
          </tbody>
        </table>
        <div class="after-table">{@render mark()}<i></i></div>
      </article>
      <div class="scroll">
        <svg width="15" height="40" viewBox="0 0 15 40"><path d="M3 5h9v2H3z" fill="#2b4266" /><path d="M2 13h6v6h4v5H8l-2-3H2z" fill="#dfe8f6" stroke="#3c5682" /><path d="M3 36h9l-4.500-5z" fill="#3c5682" /></svg>
        <div class="track"><div class="thumb"><i></i></div></div>
        <svg width="15" height="66" viewBox="0 0 15 66"><path d="M3 5h9l-4.500 5z M4 25l3.500-4l3.500 4z M4 29l3.500-4l3.500 4z M4 55l3.500 4l3.500-4z M4 59l3.500 4l3.500-4z" fill="#233a5e" /><circle cx="7.500" cy="41" r="3.500" fill="#dde6f4" stroke="#233a5e" /></svg>
      </div>
    </div>

    <footer class="status">
      <span>页面: 2/2</span>
      <span>字数: 11/458</span>
      <span><svg width="20" height="20" viewBox="0 0 20 20"><path d="M2 8 Q6 5 10 8 Q13 5 17 8 V15 Q13 14 10 17 Q6 14 2 16Z" fill="#eef3fb" stroke="#4f6da0" /><path d="M9 1 L17 11 M17 1 L9 11" stroke="#e5421f" stroke-width="2.500" /></svg>英语(美国)</span>
      <span>插入</span>
      <div class="rightbar">
        <div class="views">
          {#each views as v}<button class:hot={v === 'print'} aria-label={v}>{@render icon(v, 16)}</button>{/each}
        </div>
        <label for="zoom">120%</label>
        <svg width="20" height="20" viewBox="0 0 20 20"><circle cx="10" cy="10" r="9" fill="#e9f0fb" stroke="#4c6a9c" stroke-width="1.500" /><path d="M5 10h10" stroke="#3b5788" stroke-width="3" /></svg>
        <input id="zoom" type="range" bind:value={zoom} />
        <svg width="20" height="20" viewBox="0 0 20 20"><circle cx="10" cy="10" r="9" fill="#e9f0fb" stroke="#4c6a9c" stroke-width="1.500" /><path d="M5 10h10M10 5v10" stroke="#3b5788" stroke-width="3" /></svg>
        <svg class="grip" width="12" height="12" viewBox="0 0 12 12"><path d="M9 1h2v2H9z M5 5h2v2H5z M9 5h2v2H9z M1 9h2v2H1z M5 9h2v2H5z M9 9h2v2H9z" fill="#3b5788" /></svg>
      </div>
    </footer>
  </section>
</div>

<style>
  :global(body) {
    margin: 0;
    background: #000;
  }
  .desktop {
    --teal: #54cfb0;
    --deep: #2b6d5d;
    --glow: #a9f0df;
    --pane: #9bdadb;
    --paneglow: #d8f7f5;
    --panedeep: #4f7f7f;
    position: relative;
    height: 100vh;
    padding-left: 8px;
    box-sizing: border-box;
    overflow: hidden;
    background: linear-gradient(#0c9be6, #0aa4ee 40%, #00adf2);
    font-family: "Noto Sans", "Noto Sans CJK SC", sans-serif;
  }
  button, input, select {
    font: inherit;
    color: inherit;
    margin: 0;
    padding: 0;
    border: 0;
    background: none;
    border-radius: 0;
  }
  a {
    color: inherit;
    text-decoration: none;
  }
  u {
    text-underline-offset: 4px;
  }
  p, h1, h2, h3, ul {
    margin: 0;
    padding: 0;
  }
  h1, h2, h3 {
    font-weight: normal;
  }
  svg {
    flex: none;
    display: block;
  }

  /* graphic editor */
  .app {
    height: 100%;
    display: flex;
    flex-direction: column;
    background: #000;
  }
  .titlebar {
    height: 23px;
    flex: none;
    display: flex;
    gap: 6px;
    padding: 0 7px 0 8px;
    background: #fff;
    color: #999;
    font-size: 16px;
    line-height: 16px;
  }
  .titlebar span {
    white-space: nowrap;
  }
  .winctl {
    margin-left: auto;
  }
  .top {
    display: flex;
    height: 56px;
    flex: none;
  }
  .menubar {
    flex: 1;
    display: flex;
    align-items: center;
    gap: 18px;
    padding: 0 13px;
    background: var(--pane);
    border: 2px solid var(--panedeep);
    border-bottom-color: var(--paneglow);
    box-shadow: inset 2px 2px 0 var(--paneglow), inset -2px -2px 0 var(--panedeep);
    font: bold 14px "Liberation Serif", serif;
  }
  .help {
    margin-left: auto;
  }
  .brand {
    width: 405px;
    flex: none;
    box-sizing: border-box;
    display: flex;
    padding: 4px 0 0 4px;
    background: var(--pane);
    border: solid var(--panedeep);
    border-width: 2px 0 0 2px;
    box-shadow: inset 0 -3px 0 var(--paneglow);
    overflow: hidden;
  }
  .logo {
    margin: 7px 2px 0 0;
  }
  .product {
    flex: none;
    display: flex;
    flex-direction: column;
    align-items: center;
    white-space: nowrap;
    font-family: "Liberation Serif", serif;
  }
  .product strong {
    font-size: 24px;
    line-height: 22px;
  }
  .product em {
    font-weight: bold;
    font-size: 14px;
    line-height: 26px;
  }
  .clock {
    flex: none;
    display: flex;
    flex-direction: column;
    align-items: center;
    margin-left: 6px;
    font: italic bold 15px/15px "Liberation Mono", monospace;
    white-space: nowrap;
  }
  main {
    flex: 1;
    min-height: 0;
    display: flex;
    font-family: "Liberation Mono", monospace;
  }

  /* layer list */
  .side {
    width: 155px;
    flex: none;
    box-sizing: border-box;
    display: flex;
    flex-direction: column;
    padding: 3px 2px 3px 3px;
    background: var(--teal);
  }
  .field {
    height: 17px;
    flex: none;
    padding-left: 2px;
    background: var(--pane);
    border: 1px solid #000;
    font-size: 15px;
    line-height: 18px;
    font-weight: bold;
    white-space: nowrap;
    overflow: hidden;
  }
  .matrix {
    margin-top: 3px;
    padding: 2px;
    border: 1px solid #000;
  }
  .matrix button {
    width: 100%;
    height: 22px;
    padding-left: 2px;
    text-align: left;
    font-size: 15px;
    line-height: 16px;
    font-weight: bold;
    background: var(--pane);
    border: 2px solid;
    border-color: var(--paneglow) var(--panedeep) var(--panedeep) var(--paneglow);
  }
  .lists {
    flex: 1;
    min-height: 0;
    display: flex;
    justify-content: space-between;
    margin: 3px 0 5px -3px;
  }
  .frame {
    width: 117px;
    padding: 2px 5px 0 2px;
    overflow: hidden;
    border: solid var(--deep);
    border-width: 4px 0 0 5px;
    box-shadow: inset -5px 0 0 var(--teal), inset -7px 0 0 var(--glow), 4px 0 0 var(--glow);
  }
  ul {
    list-style: none;
    background: #000;
    padding: 1px 2px;
    margin-bottom: 3px;
  }
  li label {
    display: flex;
    align-items: center;
    height: 16px;
  }
  li input {
    appearance: none;
    width: 14px;
    height: 14px;
    box-sizing: border-box;
    background: #fff;
    border: 2px solid #fff;
    box-shadow: inset 0 0 0 2px #000;
  }
  li input.current {
    border-color: #10108c;
    box-shadow: inset 0 0 0 1px #000;
  }
  li i {
    width: 14px;
    height: 14px;
    margin: 0 2px;
  }
  .green {
    background: #3f9600;
  }
  .red {
    background: #f00;
  }
  li span {
    flex: 1;
    display: flex;
    align-items: center;
    justify-content: space-between;
    height: 14px;
    padding: 0 1px;
    font-size: 12px;
    font-weight: bold;
  }
  .white { background: #fff; }
  .mask { background: #00a67c; }
  .copper { background: #ffc84e; }
  .drill { background: #9bb5bf; }
  .route { background: #d9d9d9; }
  .misc { background: var(--pane); }
  .vbar {
    width: 12px;
    display: flex;
    flex-direction: column;
    background: #46ad94;
    border: 1px solid;
    border-color: var(--deep) var(--glow) var(--glow) var(--deep);
  }
  .lists .vbar {
    margin-right: 1px;
  }
  .thumb {
    background: var(--teal);
    border: 2px solid;
    border-color: var(--glow) var(--deep) var(--deep) var(--glow);
  }
  .lists .thumb {
    height: 79%;
    margin-bottom: auto;
  }
  .selected {
    background: #ffc84e;
    font-size: 12px;
  }
  .canvas {
    flex: 1;
    position: relative;
    overflow: hidden;
  }
  .board {
    position: absolute;
    left: 577px;
    top: 1px;
  }

  /* toolbox */
  .right {
    width: 155px;
    flex: none;
    box-sizing: border-box;
    display: flex;
    flex-direction: column;
    overflow: hidden;
    border-left: 1px solid var(--deep);
  }
  .tools {
    display: grid;
    grid-template-columns: repeat(4, 38px);
    gap: 2px;
    padding: 2px 0 2px 1px;
    border-top: 1px solid var(--teal);
  }
  .tool {
    height: 38px;
    display: grid;
    place-items: center;
    box-sizing: border-box;
    border: 3px solid;
  }
  .view .tool {
    background: var(--pane);
    border-color: var(--paneglow) #4c8484 #4c8484 var(--paneglow);
  }
  .view .nets {
    background: #b8e4e2;
  }
  .nets svg {
    outline: 2px solid #d01515;
  }
  .edit .tool {
    background: #cfcfcf;
    border-color: #f0f0f0 #777 #777 #f0f0f0;
  }
  .edit .tool:nth-child(-n+4) {
    background: #fff;
    border-color: #fff #aaa #aaa #fff;
  }
  .edit {
    padding: 3px 0 0 1px;
  }
  .pick {
    border-top: 0;
  }
  .pick .tool {
    background: #ffc84e;
    border-color: #ffe9a8 #a87a18 #a87a18 #ffe9a8;
  }
  .overview {
    flex: 1;
    display: flex;
    align-items: center;
    border-top: 2px solid var(--deep);
  }
  .coords {
    height: 43px;
    display: flex;
    flex-direction: column;
    justify-content: center;
    padding-left: 3px;
    background: var(--teal);
    border-top: 2px solid var(--glow);
    box-shadow: inset 0 2px 0 var(--deep);
    font-size: 15px;
    line-height: 15px;
    font-weight: bold;
    white-space: nowrap;
  }

  .app > footer {
    height: 33px;
    flex: none;
    display: flex;
    padding: 1px 0 0 2px;
    border-bottom: 3px solid var(--panedeep);
    font: bold 12px/33px "Liberation Mono", monospace;
  }
  .fbtn {
    display: grid;
    place-items: center;
    width: 30px;
    margin-right: 2px;
    background: #ffc;
    border: 2px solid;
    border-color: #ffe #9a9a7a #9a9a7a #ffe;
  }
  .fbtn.on {
    width: 28px;
    border: 3px solid var(--teal);
    margin-right: 1px;
  }
  footer label[for="xy"] {
    width: 44px;
    padding-left: 3px;
    background: #ffc;
    white-space: nowrap;
    margin-right: 1px;
  }
  #xy {
    width: 167px;
    background: #ffc;
    border: 2px solid;
    border-color: #8f8f70 #ddddb0 #ddddb0 #8f8f70;
    margin-right: 4px;
  }
  .app > footer p {
    flex: 1;
    padding-left: 3px;
    background: #ffc;
    margin-right: 2px;
  }
  .unit {
    width: 71px;
    display: flex;
    align-items: center;
    box-sizing: border-box;
    padding: 0 4px 0 13px;
    background: var(--teal);
    font-size: 15px;
    box-shadow: inset 6px 2px 0 var(--teal), inset 8px 4px 0 var(--glow), inset 0 -4px 0 var(--deep);
  }
  .unit select, .combo select {
    appearance: none;
    flex: 1;
    min-width: 0;
  }
  .unit i {
    width: 9px;
    height: 4px;
    border: 2px solid;
    border-color: var(--glow) var(--deep) var(--deep) var(--glow);
  }
  .strip {
    height: 7px;
    flex: none;
    margin-left: 2px;
    background: #b8ffff;
    border-top: 1px solid #000;
  }

  /* histogram popup */
  .popup {
    position: absolute;
    left: 143px;
    top: 294px;
    width: 331px;
    height: 529px;
    display: flex;
    flex-direction: column;
    background: var(--teal);
    box-shadow: 0 0 8px rgba(0, 0, 0, 0.4);
    font: bold 12px "Liberation Mono", monospace;
  }
  .popup header {
    height: 30px;
    display: flex;
    align-items: center;
    gap: 6px;
    padding: 0 8px;
    background: #fff;
    color: #999;
    font: 16px/28px "Noto Sans", sans-serif;
  }
  .popup header span {
    flex: 1;
  }
  .layer {
    margin: 3px 2px 3px 3px;
    padding-left: 2px;
    line-height: 18px;
    background: var(--pane);
    border: 2px solid #000;
  }
  .popup nav {
    display: flex;
    gap: 16px;
    padding: 2px 0 2px 13px;
    line-height: 20px;
    background: var(--pane);
    border: 1px solid #000;
    border-width: 1px 0 1px 1px;
    box-shadow: inset 2px 2px 0 var(--paneglow), inset 0 -2px 0 var(--panedeep);
  }
  .report {
    display: grid;
    grid-template-columns: 304px 14px;
    grid-template-rows: 333px 13px;
    gap: 5px;
    justify-content: start;
    margin: 5px 2px 2px 3px;
    padding: 0 0 2px;
    border: 1px solid #000;
    box-shadow: 0 -3px 0 var(--deep);
  }
  .text {
    padding: 3px 0 0 6px;
    border: 3px solid #dff8f0;
    border-left-color: #eefcf8;
    box-shadow: inset 2px 2px 0 var(--deep);
    overflow: hidden;
  }
  .text p {
    height: 13px;
    line-height: 13px;
    white-space: nowrap;
  }
  .text .caret {
    box-shadow: -1px 0 0 #000;
  }
  .text .cols {
    display: grid;
    grid-template-columns: 64px 160px auto;
  }
  .report .thumb {
    height: 60px;
    margin-bottom: auto;
  }
  .hbar {
    display: flex;
    background: #46ad94;
    border: 1px solid;
    border-color: var(--deep) var(--glow) var(--glow) var(--deep);
  }
  .report .hbar .thumb {
    flex: 1;
    height: auto;
    margin: 0;
  }
  .actions {
    flex: 1;
    display: grid;
    grid-template-columns: 110px 109px 112px;
    grid-template-rows: 27px 27px 28px;
  }
  .cell {
    padding: 3px;
    border: 1px solid #000;
    border-width: 1px 0 1px 1px;
    display: grid;
  }
  .cell button {
    background: var(--pane);
    border: 2px solid;
    border-color: var(--paneglow) var(--panedeep) var(--panedeep) var(--paneglow);
    line-height: 14px;
  }
  .cell .plain {
    background: #fff;
    border-color: #bbb;
  }
  .hl { grid-area: 1 / 2; }
  .off { grid-area: 2 / 2; }
  .update { grid-area: 1 / 3 / 3 / 4; }
  .close { grid-area: 3 / 1 / 4 / 4; }
  .arrow {
    position: absolute;
    left: 125px;
    top: 234px;
  }

  /* word processor */
  .word {
    position: absolute;
    left: 474px;
    top: 157px;
    width: 1059px;
    height: 857px;
    display: flex;
    flex-direction: column;
    background: #bfdbff;
    box-sizing: border-box;
    border: 1px solid #dce9fb;
    font-size: 15px;
    color: #15428b;
  }
  .word > header {
    height: 33px;
    flex: none;
    display: flex;
    align-items: center;
    background: #fff;
    color: #000;
  }
  .office {
    margin: 28px 8px 0 5px;
    position: relative;
  }
  .qat {
    display: flex;
    align-items: center;
    gap: 8px;
    height: 24px;
    padding: 0 10px 0 7px;
    border: 1px solid #aab4c8;
    border-left: 0;
    border-radius: 0 13px 13px 0;
  }
  .more {
    margin: 0 14px 0 7px;
  }
  h1 {
    font-size: 15px;
    white-space: nowrap;
    width: 331px;
  }
  .context {
    width: 111px;
    height: 31px;
    align-self: end;
    padding-left: 6px;
    line-height: 32px;
    background: linear-gradient(#fffef4, #fdf6b8 80%, #f9e95a);
    border-right: 1px solid #d8d8c0;
  }
  .wctl {
    margin-left: auto;
    margin-right: 17px;
  }
  .tabs {
    height: 30px;
    flex: none;
    display: flex;
    padding-left: 59px;
    line-height: 28px;
    background: #bfdbff;
  }
  .tabs button {
    padding: 0 15px;
    white-space: nowrap;
  }
  .tabs .active {
    padding: 0 12px;
    margin-right: 3px;
    background: #eaf3fe;
    border: 1px solid #8db2e3;
    border-bottom: 0;
    border-radius: 4px 4px 0 0;
    position: relative;
  }
  .ctabs {
    display: flex;
    margin-left: 3px;
    border: solid #a9c6e8;
    border-width: 0 1px;
  }
  .ctabs button {
    padding: 0 13px 0 15px;
  }
  .ctabs button + button {
    padding-left: 17px;
  }
  .qmark {
    margin: 8px 7px 0 auto;
  }
  .ribbon {
    flex: none;
    display: flex;
    gap: 4px;
    height: 119px;
    box-sizing: border-box;
    margin: 0 1px;
    padding: 1px 2px;
    background: linear-gradient(#dbe6f4, #c9d9ed 20%, #c7d8ed 60%, #e3f3fd);
    border: 1px solid #8db2e3;
    border-radius: 3px;
  }
  .group {
    display: flex;
    flex-direction: column;
    justify-content: space-between;
    box-sizing: border-box;
    height: 115px;
    border: 1px solid #a4bfdf;
    border-radius: 3px;
    background: linear-gradient(#dde8f5, #d3e0f1 15%, #c7d8ed 17%, #dbe9f8);
  }
  h2 {
    position: relative;
    height: 22px;
    font-size: 15px;
    line-height: 23px;
    text-align: center;
    color: #3e6aaa;
    background: #c1d8f0;
  }
  .launcher {
    position: absolute;
    right: 4px;
    top: 5px;
  }
  .clip { width: 83px; }
  .font { width: 247px; }
  .para { width: 189px; }
  .styles { width: 362px; }
  .find { width: 50px; }
  .clip h2 {
    padding-right: 22px;
  }
  .body {
    display: flex;
  }
  .big {
    display: flex;
    flex-direction: column;
    align-items: center;
    padding-top: 7px;
    line-height: 20px;
    height: 90px;
    box-sizing: border-box;
    white-space: nowrap;
  }
  .clip .big {
    width: 53px;
    gap: 7px;
  }
  .mini {
    display: flex;
    flex-direction: column;
    gap: 8px;
    padding: 7px 0 0 3px;
  }
  .rows {
    display: flex;
    flex-direction: column;
    gap: 4px;
    padding: 3px 0 0 3px;
  }
  .line {
    display: flex;
    gap: 5px;
  }
  .tight {
    gap: 4px;
  }
  .set, .combo {
    display: flex;
    height: 26px;
    box-sizing: border-box;
    border: 1px solid #90aed6;
    border-radius: 2px;
    background: linear-gradient(#d6e3f4, #cbdaef 48%, #bdd0ea 50%, #d0e0f4);
  }
  .set button {
    flex: 1;
    display: flex;
    align-items: center;
    justify-content: center;
    gap: 1px;
    font: 15px/18px "Liberation Serif", "Noto Sans CJK SC", serif;
    color: #222;
    border-left: 1px solid #bccfe8;
  }
  .set button:first-child {
    border-left: 0;
  }
  .set .dd {
    flex: 0 0 13px;
    border: 0;
  }
  .set sub, .set sup {
    font-size: 9px;
    line-height: 9px;
    color: #3457a6;
  }
  .set s {
    font-size: 13px;
  }
  .under {
    text-decoration: underline;
  }
  .combo {
    align-items: center;
    padding: 0 6px 0 2px;
    background: #eaf2fb;
    border-color: #c9d9ee;
    border-radius: 0;
    color: #000;
  }
  .face { width: 111px; }
  .size { width: 66px; margin-left: -5px; }
  .one { width: 26px; }
  .s179 { width: 179px; }
  .s114 { width: 114px; }
  .s51 { width: 52px; }
  .s115 { width: 115px; }
  .s52 { width: 52px; }
  .s135 { width: 135px; }
  .s36 { width: 37px; }
  .s77 { width: 77px; }
  .set .wen {
    flex-direction: column;
    gap: 0;
    color: #8595ae;
    font-size: 13px;
    line-height: 13px;
  }
  .wen small {
    font-size: 9px;
    line-height: 8px;
  }
  .boxed {
    border: 1px solid #555;
    padding: 0 2px;
    line-height: 16px;
  }
  .shade {
    background: #aaa;
    padding: 0 2px;
  }
  .ring {
    border: 1px solid #667;
    border-radius: 8px;
    width: 15px;
    font-size: 10px;
    line-height: 15px;
  }
  .grow {
    font-size: 17px;
  }
  .hot {
    background: linear-gradient(#fbdcaa, #fdb85b 50%, #ffd97f);
  }
  .gallery {
    display: flex;
    gap: 3px;
    height: 75px;
    width: 267px;
    box-sizing: border-box;
    margin: 4px 0 0 4px;
    padding: 3px 0;
    background: #d5e6f9;
    border: 1px solid #bcd2ee;
  }
  .style {
    width: 80px;
    height: 60px;
    margin: 4px 2px;
    display: flex;
    flex-direction: column;
    align-items: center;
    justify-content: end;
    background: #fff;
    color: #0a1f63;
    line-height: 20px;
    overflow: hidden;
    white-space: nowrap;
  }
  .picked {
    width: 88px;
    height: 68px;
    margin: 0;
    box-sizing: border-box;
    border: 3px solid #e9a84f;
    border-bottom-color: #f6c64b;
  }
  .style span {
    font: 12px/34px "Open Sans", sans-serif;
    color: #000;
  }
  .heading span {
    font: bold 25px/36px "Open Sans", sans-serif;
    align-self: start;
    padding-left: 2px;
  }
  .spin {
    display: grid;
    width: 18px;
    height: 75px;
    margin-top: 4px;
  }
  .spin button {
    display: grid;
    place-items: center;
    border: 1px solid #a9c3e6;
    background: #d4e4f8;
  }
  .spin button:first-child {
    background: #e6e6e6;
  }
  .change {
    width: 68px;
    gap: 8px;
  }
  .find .big {
    width: 48px;
    padding-top: 5px;
    gap: 7px;
  }
  .tile {
    display: grid;
    place-items: center;
    width: 34px;
    height: 34px;
    border: 1px solid #a4bfdf;
    border-radius: 3px;
    background: linear-gradient(#e2ecf8 72%, #c3d6ec 74%);
  }

  /* document */
  .doc {
    flex: 1;
    min-height: 0;
    display: flex;
    justify-content: space-between;
    padding-left: 45px;
    background: linear-gradient(#aac6ef, #7296c8 46%, #567db1 76%, #6592cf);
  }
  article {
    width: 952px;
    margin-top: 7px;
    box-sizing: border-box;
    padding-left: 43px;
    background: #fff;
    border-left: 1px solid #4c6186;
    box-shadow: 4px 0 3px -1px rgba(40, 60, 100, 0.5);
    color: #000;
  }
  .heading-line {
    display: flex;
    justify-content: space-between;
    height: 34px;
    padding: 0 34px 0 2px;
  }
  .heading-line > :global(.mark) {
    margin-top: 8px;
  }
  h3 {
    font: 24px/35px "Liberation Mono", monospace;
    color: #0000e0;
  }
  .mark {
    display: inline-block;
    vertical-align: -1px;
  }
  table {
    width: 872px;
    table-layout: fixed;
    border-collapse: collapse;
    font: 12px/16px "Liberation Mono", "Noto Sans CJK SC", monospace;
  }
  .edge { width: 4px; }
  .tail { width: 13px; }
  .c57 { width: 57px; }
  .c69 { width: 69px; }
  .c109 { width: 109px; }
  .c106 { width: 106px; }
  .c91 { width: 91px; }
  .c111 { width: 111px; }
  .c84 { width: 84px; }
  .c44 { width: 44px; }
  .c47 { width: 47px; }
  .c45 { width: 45px; }
  .c46 { width: 46px; }
  th, td {
    box-sizing: border-box;
    height: 26px;
    padding: 3px 0 0 2px;
    border: 1px solid #000;
    text-align: left;
    white-space: nowrap;
    overflow: hidden;
  }
  tr:nth-child(even) td, thead th {
    height: 27px;
  }
  tbody tr:last-child td:not(.out) {
    border-bottom-width: 2px;
  }
  th {
    background: #9fc;
    color: #0000e0;
    font-size: 15px;
  }
  th span {
    line-height: 18px;
  }
  .latin {
    font-size: 13px;
  }
  .wavy {
    text-decoration: underline wavy #0a8a2a 1px;
  }
  .pink {
    background: #f9c;
  }
  .out {
    border: 0;
    padding: 3px 0 0;
  }
  .out i {
    display: block;
    margin-left: 1px;
    width: 0;
    border: solid transparent;
    border-width: 2px 3px 2px 0;
    border-right-color: #777;
  }
  .end {
    padding-left: 2px;
  }
  .cjk {
    font-size: 14px;
  }
  .small {
    font-size: 11px;
  }
  .warn {
    color: #c8000c;
  }
  .sel td {
    background: linear-gradient(#a3cdf0, #a3cdf0) no-repeat 0 5px / 100% 19px;
    color: #9c2450;
  }
  .after-table {
    display: flex;
    justify-content: space-between;
    padding: 2px 44px 0 0;
  }
  .after-table :global(.mark) {
    margin-top: 8px;
  }
  .after-table i {
    width: 4px;
    height: 4px;
    border: 1px solid #777;
  }
  .scroll {
    width: 15px;
    display: flex;
    flex-direction: column;
    background: #a3bfe8;
  }
  .track {
    flex: 1;
    background: #7d9cc8;
    padding-top: 318px;
  }
  .track .thumb {
    height: 120px;
    display: grid;
    place-items: center;
    background: linear-gradient(90deg, #f2f7fd, #c5d6ee);
    border: 1px solid #6b88b5;
    border-radius: 2px;
  }
  .track i {
    width: 7px;
    height: 5px;
    border: solid #6b88b5;
    border-width: 1px 0;
  }
  .status {
    height: 28px;
    flex: none;
    display: flex;
    border-top: 1px solid #5a84b5;
    background: linear-gradient(#dcebfd, #c9defa 40%, #afc9ef 45%, #cfe2fb);
    line-height: 28px;
    color: #15296b;
    white-space: nowrap;
  }
  .status > span {
    display: flex;
    align-items: center;
    gap: 14px;
    padding: 0 10px;
    border-right: 1px solid #9dbbe0;
  }
  .status > span:first-child {
    padding-left: 8px;
  }
  .rightbar {
    margin-left: auto;
    display: flex;
    align-items: center;
    width: 374px;
    box-sizing: border-box;
    padding-left: 6px;
    background: linear-gradient(#a9c8f3, #8fb3e6 45%, #7fa5dc 50%, #9fc0ee);
    border-left: 1px solid #5a84b5;
  }
  .views {
    display: flex;
    margin-right: 10px;
    border: 1px solid #7c9dca;
    background: #b9cdea;
  }
  .views button {
    width: 23px;
    height: 24px;
    display: grid;
    place-items: center;
  }
  .status label {
    width: 48px;
  }
  #zoom {
    appearance: none;
    width: 130px;
    height: 20px;
    background: linear-gradient(#e5effc, #4c6a9c) no-repeat center / 100% 2px;
  }
  #zoom::-webkit-slider-thumb {
    appearance: none;
    width: 10px;
    height: 17px;
    background: #dfeafa;
    border: 1px solid #4c6a9c;
    border-radius: 1px 1px 5px 5px;
  }
  .grip {
    margin: 10px 0 0 10px;
  }
</style>
